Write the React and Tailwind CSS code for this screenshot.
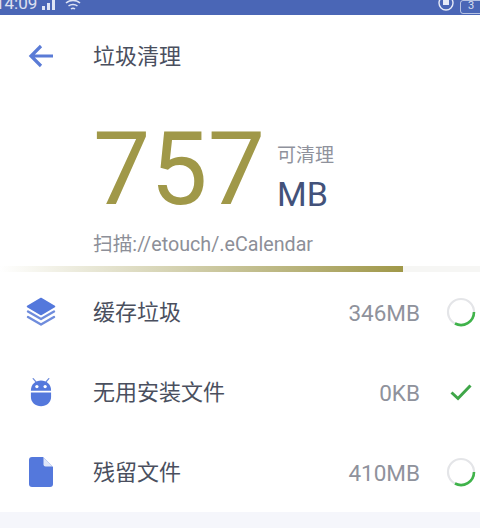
const rows = [
  { name: "缓存垃圾", size: "346MB", icon: "layers", state: "spin" },
  { name: "无用安装文件", size: "0KB", icon: "android", state: "done" },
  { name: "残留文件", size: "410MB", icon: "file", state: "spin" },
];

function RowIcon({ type }) {
  if (type === "layers")
    return (
      <svg width="30" height="30" viewBox="0 0 30 30" fill="none">
        <path d="M15 1.5 28.5 9.5 15 17.5 1.5 9.5Z" fill="#5478dc" stroke="#5478dc" strokeWidth="1.5" strokeLinejoin="round" />
        <path d="M2 14.5 15 22 28 14.5" stroke="#6f8cdc" strokeWidth="2.4" strokeLinecap="round" strokeLinejoin="round" />
        <path d="M2 20 15 27.5 28 20" stroke="#6f8cdc" strokeWidth="2.4" strokeLinecap="round" strokeLinejoin="round" />
      </svg>
    );
  if (type === "android")
    return (
      <svg width="22" height="31" viewBox="0 0 24 32" fill="none">
        <path d="M6.500 4.500 3.500 0.800M17.500 4.500 20.500 0.800" stroke="#6f8cdc" strokeWidth="1.4" strokeLinecap="round" />
        <path d="M1 14C1 7 6 3 12 3S23 7 23 14Z" fill="#5478dc" />
        <path d="M1 16H23V21C23 27 18 31 12 31S1 27 1 21Z" fill="#5478dc" />
        <circle cx="7.500" cy="9.500" r="1.800" fill="#fff" />
        <circle cx="16.500" cy="9.500" r="1.800" fill="#fff" />
      </svg>
    );
  return (
    <svg width="24" height="30" viewBox="0 0 24 30" fill="none">
      <path d="M3 0H14L24 10V27A3 3 0 0 1 21 30H3A3 3 0 0 1 0 27V3A3 3 0 0 1 3 0Z" fill="#5478dc" />
      <path d="M14.500 0.500 23.500 9.500H16.500A2 2 0 0 1 14.500 7.500Z" fill="#dfe6f8" />
    </svg>
  );
}

function Status({ state }) {
  if (state === "done")
    return (
      <svg width="24" height="20" viewBox="0 0 24 20" fill="none">
        <path d="M2.500 10.500 9 16.500 21.500 3.500" stroke="#3fa648" strokeWidth="3" />
      </svg>
    );
  return (
    <svg width="30" height="30" viewBox="0 0 30 30" fill="none">
      <circle cx="15" cy="15" r="13" stroke="#e4e5e8" strokeWidth="2.200" />
      <path d="M28 15A13 13 0 0 1 9 26.500" stroke="#3fb34a" strokeWidth="2.600" />
    </svg>
  );
}

export default function App() {
  return (
    <div className="w-[480px] h-[528px] overflow-hidden bg-white flex flex-col font-['Roboto','Noto_Sans_CJK_SC',sans-serif]">
      <div className="h-[15px] shrink-0 bg-[#4a66b6] flex items-end justify-between overflow-hidden">
        <div className="flex items-end h-[15px] -ml-[5px] gap-[6px]">
          <span className="text-white/80 text-[17px] leading-[17px] mb-[3px]">14:09</span>
          <svg width="14" height="11" viewBox="0 0 14 11" className="mb-[5px] -ml-[1px]" fill="#dfe5f5">
            <rect x="0" y="7" width="3" height="4" />
            <rect x="5" y="4" width="3" height="7" />
            <rect x="10" y="0" width="3" height="11" />
          </svg>
          <svg width="16" height="12" viewBox="0 0 16 12" className="mb-[3px] ml-[3px]" fill="none" stroke="#dfe5f5" strokeWidth="1.6">
            <path d="M1 3C5-0.500 11-0.500 15 3M3.500 6C6 4 10 4 12.500 6M6 9C7 8.200 9 8.200 10 9" />
          </svg>
        </div>
        <div className="flex items-end h-[15px] gap-[6px] -mr-[4px]">
          <svg width="16" height="16" viewBox="0 0 16 16" className="mb-[1px]" fill="none">
            <circle cx="8" cy="5" r="7" stroke="#e6eaf7" strokeWidth="1.400" />
            <rect x="5" y="1" width="6" height="6" fill="#e6eaf7" />
          </svg>
          <div className="w-[24px] h-[14px] mb-[1px] rounded-[3px] border border-white/60 text-white/80 text-[11px] leading-[10px] pl-[7px]">3</div>
        </div>
      </div>

      <div className="h-[82px] shrink-0 flex items-center pl-[28px]">
        <svg width="26" height="24" viewBox="0 0 26 24" fill="none" stroke="#5a7bd6" strokeWidth="3.200">
          <path d="M25 12H3M13 2 3 12 13 22" />
        </svg>
        <span className="ml-[39px] text-[22px] leading-[28px] text-[#4a4f5e] mt-[2px]">垃圾清理</span>
      </div>

      <div className="pl-[93px] h-[169px] shrink-0 flex flex-col">
        <div className="flex items-start h-[119px]">
          <span className="text-[102px] leading-[112px] text-[#a09848] w-[184px] mt-[16px]">757</span>
          <div className="flex flex-col mt-[47px]">
            <span className="text-[19px] leading-[24px] text-[#8f929c]">可清理</span>
            <span className="text-[34px] leading-[38px] text-[#43527a] mt-[7px]">MB</span>
          </div>
        </div>
        <span className="text-[19.7px] leading-[24px] text-[#8d8f98] mt-[17px]">扫描://etouch/.eCalendar</span>
      </div>

      <div className="h-[6px] shrink-0 bg-[#f6f6f4]">
        <div className="h-full w-[403px] bg-gradient-to-r from-[#ffffff] to-[#a09848]" />
      </div>

      {rows.map((r) => (
        <div key={r.name} className="h-[80px] shrink-0 flex items-center">
          <div className="w-[82px] shrink-0 flex justify-start pl-[26px]">
            <div className="w-[30px] flex justify-center">
              <RowIcon type={r.icon} />
            </div>
          </div>
          <span className="ml-[11px] mt-[1px] text-[22px] leading-[28px] text-[#4a4f5e]">{r.name}</span>
          <span className="ml-auto mt-[1px] text-[22.5px] leading-[28px] text-[#8f929c]">{r.size}</span>
          <div className="w-[60px] pl-[26px] flex justify-start shrink-0">
            <div className="w-[30px] flex justify-center">
              <Status state={r.state} />
            </div>
          </div>
        </div>
      ))}

      <div className="flex-1 bg-[#f5f6fb]" />
    </div>
  );
}
